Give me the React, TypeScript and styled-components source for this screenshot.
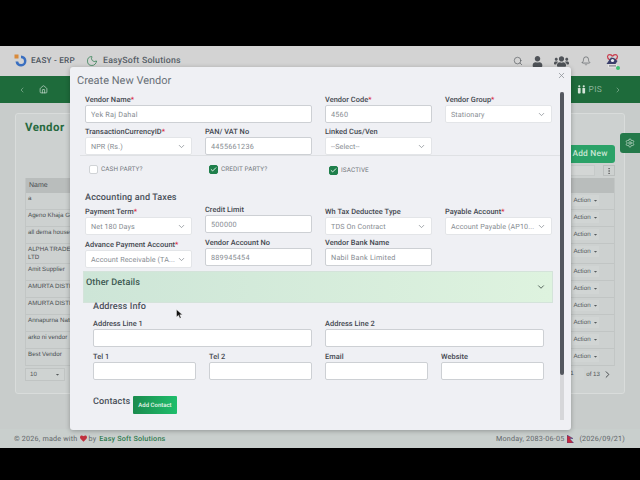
import React from "react";
import styled, { createGlobalStyle } from "styled-components";
import { Search, Bell, X, ChevronDown, ChevronRight, ChevronLeft, Home, Settings, Moon, Check, EllipsisVertical } from "lucide-react";
import { FaUser, FaUsers, FaHeart, FaCaretDown } from "react-icons/fa";

const Global = createGlobalStyle`
  html, body { margin: 0; padding: 0; background: #000; }
  * { box-sizing: border-box; }
  body { font-family: Roboto, "Liberation Sans", sans-serif; text-rendering: geometricPrecision; }
  input, button { text-rendering: geometricPrecision; }
`;

const Screen = styled.div`
  width: 640px; height: 480px; display: flex; flex-direction: column; background: #000; overflow: hidden;
`;
const Band = styled.div<{ $h: number }>`height: ${(p) => p.$h}px; flex: none; background: #000;`;
const Page = styled.div`
  position: relative; height: 402px; flex: none; display: flex; flex-direction: column;
  background: #c8cccb; overflow: hidden;
`;
const Header = styled.header`
  height: 30px; flex: none; display: flex; align-items: center; padding: 0 20px 0 14px; background: #d3d3d3;
`;
const BrandMark = styled.svg`flex: none; width: 14px; height: 14px;`;
const Brand = styled.span`
  margin-left: 3px; font-size: 8.2px; font-weight: 500; color: #4d5560; letter-spacing: .2px; width: 55px; white-space: nowrap;
`;
const MoonIcon = styled(Moon)`flex: none; color: #2f7d50;`;
const Company = styled.span`
  margin-left: 5px; font-size: 8.8px; font-weight: 500; color: #555d66; letter-spacing: .2px; white-space: nowrap;
`;
const HeaderRight = styled.div`
  margin-left: auto; display: flex; align-items: center; color: #4f5358;
`;
const HeadIcon = styled.span<{ $w: number }>`
  width: ${(p) => p.$w}px; display: flex; justify-content: center; align-items: center;
`;
const AvatarWrap = styled.span`
  position: relative; width: 15px; height: 16px; display: flex; margin-left: 5px;
`;
const OnlineDot = styled.i`
  position: absolute; right: 0; bottom: -1px; width: 4px; height: 4px; border-radius: 50%; background: #3cc472;
`;
const Nav = styled.nav`
  height: 27px; flex: none; display: flex; align-items: center; padding: 0 18px; background: #1e6b3b; color: #8fb69d;
`;
const NavHome = styled.span`margin-left: 13px; display: flex; color: #cfe0d5;`;
const NavRight = styled.div`
  margin-left: auto; display: flex; align-items: center; gap: 3px; font-size: 8.4px; color: #8fb69d; letter-spacing: .3px;
`;
const PisIcon = styled.svg`width: 9px; height: 9px; color: #d6e4da;`;
const PisChevron = styled.span`display: flex; margin-left: 9px;`;
const Content = styled.main`flex: 1; padding: 10px 15px 0;`;
const Card = styled.section`
  height: 281px; padding: 5px 9px 0; background: #cdd1d0; border: 1px solid #d9dcdb; border-radius: 3px;
  display: flex; flex-direction: column;
`;
const CardTitle = styled.h2`
  margin: 0; font-size: 11.5px; line-height: 16px; font-weight: 700; color: #27693f; letter-spacing: .4px;
`;
const Toolbar = styled.div`
  margin-top: 10px; height: 18px; display: flex; justify-content: flex-end;
`;
const AddNew = styled.button`
  width: 50px; height: 18px; padding: 0; border: 0; border-radius: 0 3px 3px 0; background: #2ba268; color: #c9e6d4;
  font: 500 8.4px Roboto, sans-serif; letter-spacing: .2px;
`;
const DotsRow = styled.div`
  margin-top: 2px; height: 11px; display: flex; justify-content: flex-end; gap: 8px;
`;
const GhostSearch = styled.span`width: 26px; height: 11px; background: #d3d6d5; border: 1px solid #c6cac9;`;
const DotsBtn = styled.span`
  width: 12px; height: 11px; display: flex; align-items: center; justify-content: center;
  border: 1px solid #bbbfbe; color: #555;
`;
const Table = styled.div`
  margin-top: 2px; border: 1px solid #c2c6c5; border-width: 0 1px;
`;
const TableHead = styled.div`
  height: 15px; display: flex; align-items: center; padding: 0 3px; background: #b9bdbc;
  font: 500 7px "Liberation Sans", sans-serif; color: #484d50;
`;
const Row = styled.div<{ $h: number }>`
  height: ${(p) => p.$h}px; display: flex; align-items: flex-start; justify-content: space-between;
  padding: 2px 15px 0 2px; border-bottom: 1px solid #c1c5c4; font: 6.2px "Liberation Sans", sans-serif; color: #4a4f52;
`;
const Name = styled.span`width: 82px; line-height: 8px;`;
const ActionBtn = styled.span`
  width: 27px; height: 11px; display: flex; align-items: center; justify-content: center; gap: 2px;
  background: #d1d5d4; font-size: 6.2px; color: #555a5c;
`;
const Pager = styled.div`
  margin-top: 1px; display: flex; justify-content: space-between; align-items: center; height: 14px;
  font: 6.2px "Liberation Sans", sans-serif; color: #55595b;
`;
const PageSize = styled.span`
  width: 40px; height: 13px; display: flex; align-items: center; justify-content: space-between; padding: 0 4px;
  border: 1px solid #c0c4c3; background: #cfd3d2;
`;
const PagerRight = styled.span`display: flex; align-items: center; gap: 2px; margin-right: 2px; color: #55595b;`;
const PagerNum = styled.span`
  width: 15px; height: 12px; line-height: 12px; padding-left: 1px; background: #cfd3d2; border-radius: 2px;
`;
const SideTab = styled.span`
  position: absolute; left: 620px; top: 87px; width: 20px; height: 20px; display: flex; align-items: center;
  justify-content: center; background: #24794a; border-radius: 3px 0 0 3px; color: #b7d3c2;
`;
const Footer = styled.footer`
  height: 19px; flex: none; margin-top: auto; display: flex; align-items: center; justify-content: space-between;
  padding: 0 15px 0 14px; background: #c9cfcd; font-size: 7.2px; color: #5f6568; letter-spacing: .2px;
`;
const FootLeft = styled.span`display: flex; align-items: center; gap: 2px;`;
const FootLink = styled.b`color: #2e7a4d; font-weight: 500; margin-left: 1px;`;
const FootRight = styled.span`display: flex; align-items: center; gap: 3px; font-weight: 400;`;
const FlagIcon = styled.svg`margin: 0 2px 0 0; width: 7px; height: 8px;`;

const Modal = styled.div`
  position: absolute; left: 70px; top: 21px; width: 501px; height: 363px; background: #eff0f4;
  border-radius: 3px; box-shadow: 0 1px 5px rgba(0,0,0,.28); overflow: hidden;
`;
const ModalTitle = styled.h3`
  margin: 0; height: 26px; padding-left: 7px; font-size: 11px; line-height: 28px; font-weight: 400; color: #6a7078;
`;
const CloseBtn = styled.span`
  position: absolute; right: 5px; top: 4px; display: flex; color: #8b9096;
`;
const ScrollTrack = styled.div`
  position: absolute; left: 490px; top: 25px; width: 4px; height: 328px; background: #d6d7da;
`;
const ScrollThumb = styled.div`width: 4px; height: 283px; background: #54585f; border-radius: 2px;`;
const Body = styled.div`padding: 0 0 0 15px; display: flex; flex-direction: column;`;
const Grid = styled.div<{ $gap?: number }>`
  width: 467px; display: grid; grid-template-columns: repeat(4, 107px); column-gap: 13px; margin-top: ${(p) => p.$gap ?? 0}px;
`;
const Field = styled.div<{ $span?: number; $up?: number }>`
  grid-column: span ${(p) => p.$span ?? 1}; margin-top: ${(p) => -(p.$up ?? 0)}px; min-width: 0;
`;
const Label = styled.label`
  display: block; height: 12px; font-size: 7.4px; line-height: 14px; font-weight: 500; color: #3f464e; white-space: nowrap; letter-spacing: .05px;
`;
const Req = styled.span`color: #d8263c;`;
const Input = styled.input`
  display: block; width: 100%; height: 18px; padding: 0 5px; background: #fff; border: 1px solid #cdd0d4; border-radius: 2px;
  font: 400 7.3px Roboto, sans-serif; color: #868b91; outline: 0; letter-spacing: .2px;
`;
const Select = styled.div`
  height: 18px; display: flex; align-items: center; justify-content: space-between; padding: 0 5px; background: #fff;
  border: 1px solid #e3e5e8; border-radius: 2px; font-size: 7.2px; color: #868b91; letter-spacing: .1px; white-space: nowrap;
`;
const SelectText = styled.span`flex: none;`;
const Arrow = styled(ChevronDown)`flex: none; color: #868b91;`;
const Divider = styled.div`width: 480px; height: 1px; margin-left: -5px; background: #dfe1e4;`;
const CheckRow = styled.div`
  width: 467px; height: 26px; display: grid; grid-template-columns: repeat(4, 107px); column-gap: 13px; align-items: center;
`;
const CheckItem = styled.div<{ $down?: number }>`
  display: flex; align-items: center; gap: 3px; padding-left: 4px; font-size: 6.4px; color: #72777d; letter-spacing: .1px;
  margin-top: ${(p) => p.$down ?? 0}px;
`;
const Box = styled.span<{ $on?: boolean }>`
  width: 9px; height: 9px; flex: none; display: flex; align-items: center; justify-content: center; border-radius: 2px;
  background: ${(p) => (p.$on ? "#1f7f4b" : "#fff")}; border: 1px solid ${(p) => (p.$on ? "#1f7f4b" : "#d0d3d6")}; color: #fff;
`;
const SectionTitle = styled.h4`
  margin: 9px 0 0; height: 14px; line-height: 14px; font-size: 9.1px; font-weight: 500; color: #4b525b; letter-spacing: .1px;
`;
const AddressTitle = styled.h4`
  margin: 0 0 0 8px; height: 7px; line-height: 8px; font-size: 9.1px; font-weight: 500; color: #4b525b; letter-spacing: .1px;
`;
const Accordion = styled.div`
  width: 470px; height: 32px; margin: 3px 0 0 -2px; padding: 5px 6px 0 2px; flex: none; display: flex; justify-content: space-between;
  background: linear-gradient(90deg, #cde5d7, #def3df); border: 1px solid #d4e3da;
`;
const AccTitle = styled.span`
  display: block; font-size: 9.1px; line-height: 12px; font-weight: 500; color: #3e5a52; letter-spacing: .1px;
`;
const AccChevron = styled(ChevronDown)`margin-top: 5px; color: #3c4a45;`;
const Indented = styled.div`
  padding-left: 8px; width: 467px;
`;
const SubGrid = styled.div<{ $gap?: number }>`
  display: grid; grid-template-columns: repeat(4, 103px); column-gap: 13px; margin-top: ${(p) => p.$gap ?? 0}px;
`;
const ContactsRow = styled.div`
  display: flex; align-items: center; margin-top: 16px; padding-left: 8px; height: 18px;
`;
const ContactsTitle = styled.span`
  width: 40px; font-size: 9.1px; font-weight: 500; color: #4b525b; margin-top: -6px; letter-spacing: .1px;
`;
const AddContact = styled.button`
  width: 44px; height: 18px; padding: 0; border: 0; border-radius: 1px; color: #e6f6ec;
  background: linear-gradient(90deg, #1a8b4d, #1fbe6c); font: 500 6px Roboto, sans-serif; white-space: nowrap;
`;
const Cursor = styled.svg`position: absolute; left: 176px; top: 263px; width: 7px; height: 10px;`;

const names: [string, number][] = [
  ["a", 17], ["Ageno Khaja Ghar", 17], ["all dema house", 17], ["ALPHA TRADE CENTER LTD", 20],
  ["Amit Supplier", 17], ["AMURTA DISTRICT", 17], ["AMURTA DISTRICT", 17], ["Annapurna Naturals", 17],
  ["arko ni vendor", 17], ["Best Vendor", 17],
];

const F = ({ label, req, value, span, up }: { label: string; req?: boolean; value?: string; span?: number; up?: number }) => (
  <Field $span={span} $up={up}>
    <Label>{label}{req && <Req>*</Req>}</Label>
    <Input readOnly value={value ?? ""} />
  </Field>
);
const S = ({ label, req, value }: { label: string; req?: boolean; value: string }) => (
  <Field>
    <Label>{label}{req && <Req>*</Req>}</Label>
    <Select><SelectText>{value}</SelectText><Arrow size={9} /></Select>
  </Field>
);

export default function App() {
  return (
    <Screen>
      <Global />
      <Band $h={46} />
      <Page>
        <Header>
          <BrandMark viewBox="0 0 14 14">
            <rect x="0.5" y="0.5" width="4" height="4" fill="#d98a3a" />
            <path d="M7 1.500a5.500 5.500 0 1 1-5.500 6h2.700a2.900 2.900 0 1 0 2.800-3.300z" fill="#3a6fc0" />
          </BrandMark>
          <Brand>EASY - ERP</Brand>
          <MoonIcon size={12} strokeWidth={1.5} />
          <Company>EasySoft Solutions</Company>
          <HeaderRight>
            <HeadIcon $w={12}><Search size={10} strokeWidth={1.5} /></HeadIcon>
            <HeadIcon $w={26}><FaUser size={11} /></HeadIcon>
            <HeadIcon $w={22}><FaUsers size={15} /></HeadIcon>
            <HeadIcon $w={28}><Bell size={10} strokeWidth={1.5} /></HeadIcon>
            <AvatarWrap>
              <svg width="15" height="16" viewBox="0 0 15 16">
                <path d="M7.500 3.500C6.500 1 3 1 2.500 3.500 2.300 5 3.500 6 5 7M7.500 3.500C8.500 1 12 1 12.500 3.500 12.700 5 11.500 6 10 7" fill="none" stroke="#c9384a" strokeWidth="1.200" />
                <path d="M1.500 11 6 4.500l3 .5 3.500 3-2 3z" fill="#3a3f6a" />
                <circle cx="7.500" cy="7.500" r="1.600" fill="#f1f1f1" />
                <rect x="3" y="11.500" width="9" height="3" fill="#e8e8e8" />
                <rect x="4" y="12.300" width="7" height="1.200" fill="#7d7f86" />
              </svg>
              <OnlineDot />
            </AvatarWrap>
          </HeaderRight>
        </Header>
        <Nav>
          <ChevronLeft size={8} />
          <NavHome><Home size={9} strokeWidth={1.8} /></NavHome>
          <NavRight>
            <PisIcon viewBox="0 0 10 10">
              <circle cx="2.500" cy="1.500" r="1.200" fill="currentColor" />
              <circle cx="7.500" cy="1.500" r="1.200" fill="currentColor" />
              <rect x="1" y="3.200" width="3" height="6.300" rx=".8" fill="currentColor" />
              <rect x="6" y="3.200" width="3" height="6.300" rx=".8" fill="currentColor" />
            </PisIcon>
            <span>PIS</span>
            <PisChevron><ChevronRight size={8} /></PisChevron>
          </NavRight>
        </Nav>
        <Content>
          <Card>
            <CardTitle>Vendor</CardTitle>
            <Toolbar><AddNew>Add New</AddNew></Toolbar>
            <DotsRow><GhostSearch /><DotsBtn><EllipsisVertical size={8} /></DotsBtn></DotsRow>
            <Table>
              <TableHead>Name</TableHead>
              {names.map(([n, h], i) => (
                <Row key={i} $h={h}>
                  <Name>{n}</Name>
                  <ActionBtn>Action <FaCaretDown size={5} /></ActionBtn>
                </Row>
              ))}
            </Table>
            <Pager>
              <PageSize>10 <FaCaretDown size={5} /></PageSize>
              <PagerRight>
                <PagerNum>1</PagerNum>
                <span>of 13</span>
                <ChevronRight size={11} color="#3c4043" />
              </PagerRight>
            </Pager>
          </Card>
        </Content>
        <Footer>
          <FootLeft>© 2026, made with <FaHeart size={7} color="#c0303d" /> by <FootLink>Easy Soft Solutions</FootLink></FootLeft>
          <FootRight>
            Monday, 2083-06-05
            <FlagIcon viewBox="0 0 7 8">
              <path d="M0 0 6 3.500H2.500L6.500 8H0z" fill="#c8283c" stroke="#2a3f8a" strokeWidth=".5" />
            </FlagIcon>
            (2026/09/21)
          </FootRight>
        </Footer>
        <SideTab><Settings size={10} /></SideTab>

        <Modal>
          <ModalTitle>Create New Vendor</ModalTitle>
          <CloseBtn><X size={9} /></CloseBtn>
          <Body>
            <Grid>
              <F label="Vendor Name" req value="Yek Raj Dahal" span={2} />
              <F label="Vendor Code" req value="4560" />
              <S label="Vendor Group" req value="Stationary" />
            </Grid>
            <Grid $gap={2}>
              <S label="TransactionCurrencyID" req value="NPR (Rs.)" />
              <F label="PAN/ VAT No" value="4455661236" />
              <S label="Linked Cus/Ven" value="--Select--" />
            </Grid>
            <Divider />
            <CheckRow>
              <CheckItem><Box />CASH PARTY?</CheckItem>
              <CheckItem><Box $on><Check size={7} strokeWidth={3} /></Box>CREDIT PARTY?</CheckItem>
              <CheckItem $down={2}><Box $on><Check size={7} strokeWidth={3} /></Box>ISACTIVE</CheckItem>
            </CheckRow>
            <SectionTitle>Accounting and Taxes</SectionTitle>
            <Grid>
              <S label="Payment Term" req value="Net 180 Days" />
              <F label="Credit Limit" value="500000" up={2} />
              <S label="Wh Tax Deductee Type" value="TDS On Contract" />
              <S label="Payable Account" req value="Account Payable (AP10..." />
            </Grid>
            <Grid $gap={3}>
              <S label="Advance Payment Account" req value="Account Receivable (TA..." />
              <F label="Vendor Account No" value="889945454" up={2} />
              <F label="Vendor Bank Name" value="Nabil Bank Limited" up={2} />
            </Grid>
            <Accordion>
              <AccTitle>Other Details</AccTitle>
              <AccChevron size={10} strokeWidth={2} />
            </Accordion>
            <AddressTitle>Address Info</AddressTitle>
            <Indented>
              <SubGrid $gap={7}>
                <F label="Address Line 1" span={2} />
                <F label="Address Line 2" span={2} />
              </SubGrid>
              <SubGrid $gap={3}>
                <F label="Tel 1" />
                <F label="Tel 2" />
                <F label="Email" />
                <F label="Website" />
              </SubGrid>
            </Indented>
            <ContactsRow>
              <ContactsTitle>Contacts</ContactsTitle>
              <AddContact>Add Contact</AddContact>
            </ContactsRow>
          </Body>
          <ScrollTrack><ScrollThumb /></ScrollTrack>
        </Modal>
        <Cursor viewBox="0 0 7 10">
          <path d="M.5.5v7.500l2-1.700 1.300 3 1.300-.6-1.300-2.900h2.600z" fill="#111" stroke="#fff" strokeWidth=".4" />
        </Cursor>
      </Page>
      <Band $h={32} />
    </Screen>
  );
}
